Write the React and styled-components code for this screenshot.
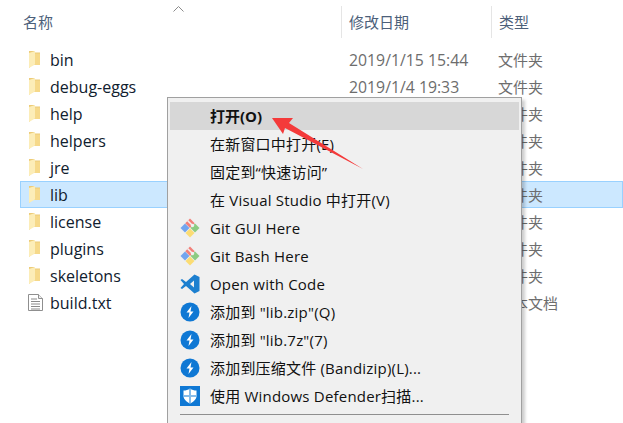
import styled, { createGlobalStyle } from "styled-components";

const GlobalStyle = createGlobalStyle`
  html, body {
    margin: 0;
    padding: 0;
    background: #fff;
    overflow: hidden;
  }
`;
const Page = styled.div`
  position: relative;
  width: 623px;
  height: 423px;
  overflow: hidden;
  background: #fff;
  font-family: "Open Sans", "Noto Sans CJK SC", sans-serif;
  font-size: 15px;
`;
const Header = styled.div`
  display: flex;
  height: 38px;
  padding-top: 6px;
  color: #4c607a;
`;
const HeadCell = styled.div`
  box-sizing: border-box;
  width: ${(p) => p.$w}px;
  height: 32px;
  padding-left: ${(p) => p.$pad}px;
  line-height: 32px;
  border-right: ${(p) => (p.$line ? "1px solid #e5e5e5" : "none")};
`;
const SortCaret = styled.svg`
  position: absolute;
  left: 173px;
  top: 6px;
`;
const List = styled.div`
  display: flex;
  flex-direction: column;
  padding-top: 2px;
`;
const Row = styled.div`
  display: flex;
  align-items: center;
  box-sizing: border-box;
  height: 27px;
  margin-left: 20px;
  background: ${(p) => (p.$selected ? "#cce8ff" : "transparent")};
  border: 1px solid ${(p) => (p.$selected ? "#99d1ff" : "transparent")};
`;
const IconSlot = styled.div`
  display: flex;
  width: 29px;
  padding-left: 7px;
  box-sizing: border-box;
`;
const Name = styled.div`
  width: 299px;
  color: #10202e;
  font-size: 16px;
`;
const Modified = styled.div`
  width: 149px;
  color: #6d6d6d;
  font-size: 15.8px;
`;
const Kind = styled.div`
  color: #6d6d6d;
`;
const Menu = styled.div`
  position: absolute;
  left: 167px;
  top: 97px;
  width: 355px;
  height: 340px;
  box-sizing: border-box;
  padding: 4px 2px;
  background: #f0f0f0;
  border: 1px solid #a0a0a0;
  box-shadow: 3px 3px 3px rgba(0, 0, 0, 0.2);
`;
const Item = styled.div`
  display: flex;
  align-items: center;
  height: 28px;
  background: ${(p) => (p.$active ? "#d7d7d7" : "transparent")};
  color: #111;
  font-weight: ${(p) => (p.$active ? 700 : 400)};
  letter-spacing: ${(p) => (p.$active ? 0 : 0.2)}px;
  line-height: 26px;
`;
const ItemIcon = styled.div`
  display: flex;
  justify-content: center;
  width: 39px;
  margin-right: 1px;
`;
const Separator = styled.div`
  height: 1px;
  margin: 4px 10px 0;
  background: #8f8f8f;
`;
const Arrow = styled.svg`
  position: absolute;
  left: 270px;
  top: 112px;
`;

const Folder = () => (
  <svg width="13" height="19" viewBox="0 0 13 19">
    <path d="M1 1h5l1 1.500h5V15H4l-3 3z" fill="#eccb78" />
    <path d="M1 3L7 1v13.500L1 18z" fill="#fcedb8" />
    <path d="M7 3.500h5V15H7z" fill="#f6d98a" />
  </svg>
);

const TextFile = () => (
  <svg width="15" height="17" viewBox="0 0 15 17">
    <path d="M.5.500h10l4 4v12H.5z" fill="#fff" stroke="#8f8f8f" />
    <path d="M10.500.500v4h4" fill="#eee" stroke="#8f8f8f" />
    <path d="M3 5h6M3 7.500h9M3 10h9M3 12.500h9M3 15h9" stroke="#8a8a8a" />
  </svg>
);

const GitIcon = () => (
  <svg width="20" height="20" viewBox="0 0 20 20">
    <path d="M10 0.500l4.700 4.700-4.700 4.800-4.800-4.800z" fill="#f2807a" />
    <path d="M5 5.500L9.500 10 5 14.500.5 10z" fill="#72a5ee" />
    <path d="M15 5.500l4.500 4.500-4.500 4.500L10.500 10z" fill="#8ccb82" />
    <path d="M10 10.500l4.500 4.500-4.500 4.500L5.500 15z" fill="#fbdc74" />
    <path d="M7.500 2.500l5 5" stroke="#f0f0f0" strokeWidth="1.600" />
    <circle cx="12.500" cy="7.500" r="1.700" fill="#f0f0f0" />
  </svg>
);

const CodeIcon = () => (
  <svg width="20" height="20" viewBox="0 0 20 20">
    <path d="M14.500 0.500L19.500 3v14l-5 2.500L6 12 2 15 0.500 14 4 10 0.500 6 2 5l4 3z" fill="#1c7fcf" />
    <path d="M14 6.500L10 10l4 3.500z" fill="#f0f0f0" />
  </svg>
);

const BandizipIcon = () => (
  <svg width="20" height="20" viewBox="0 0 20 20">
    <circle cx="10" cy="10" r="9.500" fill="#0f78d4" />
    <path d="M11.500 4L6.500 10.500h3L8.500 16l5-6.500h-3z" fill="#fff" />
  </svg>
);

const DefenderIcon = () => (
  <svg width="20" height="20" viewBox="0 0 20 20">
    <rect width="20" height="20" fill="#0f78d4" />
    <path d="M10 2.500c2 1.500 4 2 6.500 2v5.500c0 3.500-3.500 6-6.500 7.500-3-1.500-6.500-4-6.500-7.500V4.500c2.500 0 4.500-.500 6.500-2z" fill="#fff" />
    <path d="M9.500 3v14h1V3zM4 9.500h12v1H4z" fill="#0f78d4" />
  </svg>
);

const files = [
  { name: "bin", date: "2019/1/15 15:44", kind: "文件夹" },
  { name: "debug-eggs", date: "2019/1/4 19:33", kind: "文件夹" },
  { name: "help", kind: "文件夹" },
  { name: "helpers", kind: "文件夹" },
  { name: "jre", kind: "文件夹" },
  { name: "lib", kind: "文件夹", selected: true },
  { name: "license", kind: "文件夹" },
  { name: "plugins", kind: "文件夹" },
  { name: "skeletons", kind: "文件夹" },
  { name: "build.txt", kind: "文本文档", text: true },
];

const items = [
  { label: "打开(O)", active: true },
  { label: "在新窗口中打开(E)" },
  { label: "固定到“快速访问”" },
  { label: "在 Visual Studio 中打开(V)" },
  { label: "Git GUI Here", icon: <GitIcon /> },
  { label: "Git Bash Here", icon: <GitIcon /> },
  { label: "Open with Code", icon: <CodeIcon /> },
  { label: '添加到 "lib.zip"(Q)', icon: <BandizipIcon /> },
  { label: '添加到 "lib.7z"(7)', icon: <BandizipIcon /> },
  { label: "添加到压缩文件 (Bandizip)(L)...", icon: <BandizipIcon /> },
  { label: "使用 Windows Defender扫描...", icon: <DefenderIcon /> },
];

export default function App() {
  return (
    <Page>
      <GlobalStyle />
      <Header>
        <HeadCell $w={342} $pad={23} $line>名称</HeadCell>
        <HeadCell $w={150} $pad={7} $line>修改日期</HeadCell>
        <HeadCell $w={131} $pad={7}>类型</HeadCell>
      </Header>
      <SortCaret width="11" height="6" viewBox="0 0 11 6">
        <path d="M.5 5.500l5-5 5 5" fill="none" stroke="#8a8a8a" />
      </SortCaret>
      <List>
        {files.map((f) => (
          <Row key={f.name} $selected={f.selected}>
            <IconSlot>{f.text ? <TextFile /> : <Folder />}</IconSlot>
            <Name>{f.name}</Name>
            <Modified>{f.date}</Modified>
            <Kind>{f.kind}</Kind>
          </Row>
        ))}
      </List>
      <Menu>
        {items.map((it) => (
          <Item key={it.label} $active={it.active}>
            <ItemIcon>{it.icon}</ItemIcon>
            {it.label}
          </Item>
        ))}
        <Separator />
      </Menu>
      <Arrow width="100" height="62" viewBox="0 0 100 62">
        <path d="M2 6L23 6 19 11 93 57 15 16 13 22z" fill="#f43a3a" />
      </Arrow>
    </Page>
  );
}
